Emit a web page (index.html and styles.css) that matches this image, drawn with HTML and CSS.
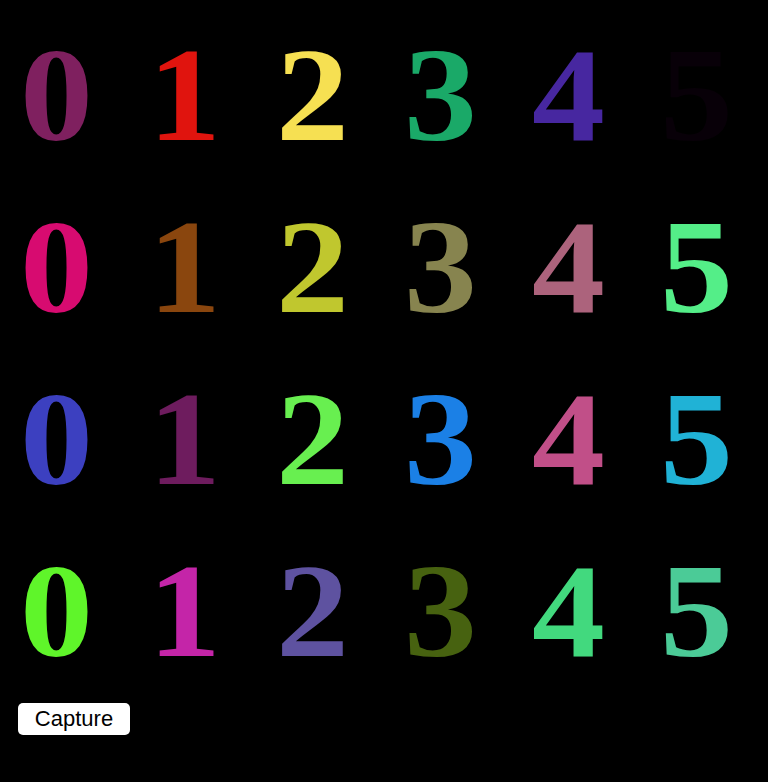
FILE: index.html
```html
<!DOCTYPE html>
<html>
<head>
<meta charset="utf-8">
<link rel="stylesheet" href="styles.css">
</head>
<body>
<div class="board">
  <div class="row">
    <span class="d" style="color:#7f205f">0</span>
    <span class="d" style="color:#e0140e">1</span>
    <span class="d" style="color:#f6e052">2</span>
    <span class="d" style="color:#1aa968">3</span>
    <span class="d" style="color:#4727a0">4</span>
    <span class="d" style="color:#080008">5</span>
  </div>
  <div class="row">
    <span class="d" style="color:#d70b70">0</span>
    <span class="d" style="color:#8a460e">1</span>
    <span class="d" style="color:#c0c72e">2</span>
    <span class="d" style="color:#87844f">3</span>
    <span class="d" style="color:#ac637c">4</span>
    <span class="d" style="color:#54ee88">5</span>
  </div>
  <div class="row">
    <span class="d" style="color:#3c40c0">0</span>
    <span class="d" style="color:#6e1c5e">1</span>
    <span class="d" style="color:#68ef50">2</span>
    <span class="d" style="color:#1b80e6">3</span>
    <span class="d" style="color:#c14f88">4</span>
    <span class="d" style="color:#20b2d6">5</span>
  </div>
  <div class="row">
    <span class="d" style="color:#5ff52a">0</span>
    <span class="d" style="color:#c425a8">1</span>
    <span class="d" style="color:#5e52a0">2</span>
    <span class="d" style="color:#476210">3</span>
    <span class="d" style="color:#42d97e">4</span>
    <span class="d" style="color:#4bcb97">5</span>
  </div>
</div>
<button class="capture">Capture</button>
</body>
</html>
```
FILE: styles.css
```css
html, body {
  background: #000;
}
body {
  margin: 8px;
}
.board {
  display: flex;
  flex-direction: column;
  padding-top: 1px;
}
.row {
  display: grid;
  grid-template-columns: repeat(6, 128px);
  padding-left: 12px;
  height: 172px;
}
.d {
  display: block;
  font-family: "Liberation Serif", "Times New Roman", serif;
  font-weight: bold;
  font-size: 146px;
  line-height: 172px;
  transform: scaleY(0.91);
  transform-origin: 50% 55%;
}
.capture {
  display: block;
  margin: 6px 0 0 10px;
  width: 112px;
  height: 32px;
  padding: 0;
  border: none;
  border-radius: 5px;
  background: #fff;
  color: #000;
  font-family: "Liberation Sans", Arial, sans-serif;
  font-size: 22px;
}
```
